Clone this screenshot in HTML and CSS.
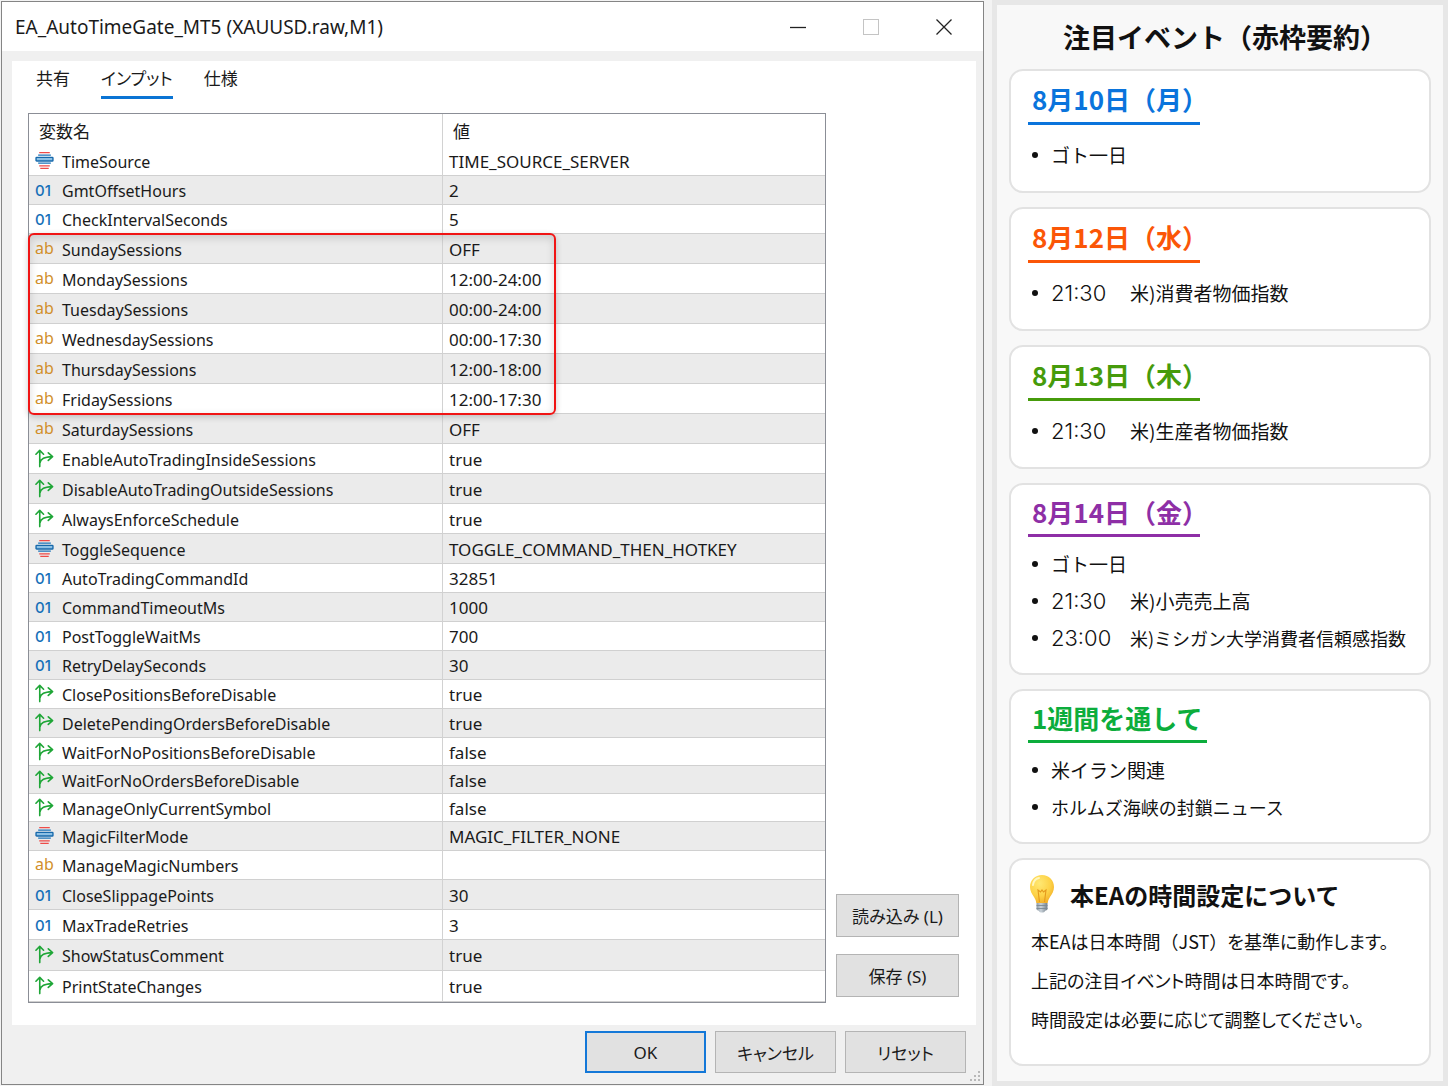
FILE: index.html
```html
<!DOCTYPE html>
<html lang="ja">
<head>
<meta charset="utf-8">
<meta name="viewport" content="width=device-width, initial-scale=1">
<title>EA_AutoTimeGate_MT5</title>
<link rel="stylesheet" href="styles.css">
</head>
<body>
<svg class="sprite" aria-hidden="true">
  <symbol id="i-enum" viewBox="0 0 18 18">
    <path d="M4 1.500h10M4 14h10M5 16.500h8" stroke="#ee4b48" stroke-width="1.200"/>
    <path d="M3 4h12M3 11.500h12" stroke="#1c74b8" stroke-width="1.200"/>
    <rect x="1" y="6" width="16" height="3.500" rx=".6" fill="#8cc0e4" stroke="#1668ab" stroke-width="1.300"/>
  </symbol>
  <symbol id="i-bool" viewBox="0 0 20 20">
    <path d="M5 18.500V2M1 5.500 5 1.500l4 4M5 15c1-5 5-6.500 13-7M14 4l4.500 4-4.500 4" fill="none" stroke="#1fa637" stroke-width="1.700" stroke-linecap="round" stroke-linejoin="round"/>
  </symbol>
</svg>
<div class="screen">
  <main class="window">
    <header class="titlebar">
      <h1 class="window-title">EA_AutoTimeGate_MT5 (XAUUSD.raw,M1)</h1>
      <div class="window-controls">
        <button type="button" aria-label="最小化"><svg width="18" height="18" viewBox="0 0 18 18"><path d="M1 9.500h16" stroke="#222" stroke-width="1.300"/></svg></button>
        <button type="button" aria-label="最大化" disabled><svg width="18" height="18" viewBox="0 0 18 18"><rect x="1.500" y="1.500" width="15" height="15" fill="none" stroke="#c4c4c4"/></svg></button>
        <button type="button" aria-label="閉じる"><svg width="18" height="18" viewBox="0 0 18 18"><path d="m1.500 1.500 15 15m0-15-15 15" stroke="#222" stroke-width="1.300"/></svg></button>
      </div>
    </header>
    <section class="panel">
      <nav class="tabs">
        <button type="button" class="tab">共有</button>
        <button type="button" class="tab active">インプット</button>
        <button type="button" class="tab">仕様</button>
      </nav>
      <div class="inputs">
        <div class="table-box">
          <table class="params">
            <thead><tr><th scope="col" class="col-name">変数名</th><th scope="col">値</th></tr></thead>
            <tbody class="rows-30">
              <tr><td><svg class="icon"><use href="#i-enum"/></svg>TimeSource</td><td>TIME_SOURCE_SERVER</td></tr>
            </tbody>
            <tbody class="rows-29">
              <tr class="alt"><td><span class="num">01</span>GmtOffsetHours</td><td>2</td></tr>
              <tr><td><span class="num">01</span>CheckIntervalSeconds</td><td>5</td></tr>
            </tbody>
            <tbody class="rows-30">
              <tr class="alt"><td><span class="str">ab</span>SundaySessions</td><td>OFF</td></tr>
              <tr><td><span class="str">ab</span>MondaySessions</td><td>12:00-24:00</td></tr>
              <tr class="alt"><td><span class="str">ab</span>TuesdaySessions</td><td>00:00-24:00</td></tr>
              <tr><td><span class="str">ab</span>WednesdaySessions</td><td>00:00-17:30</td></tr>
              <tr class="alt"><td><span class="str">ab</span>ThursdaySessions</td><td>12:00-18:00</td></tr>
              <tr><td><span class="str">ab</span>FridaySessions</td><td>12:00-17:30</td></tr>
              <tr class="alt"><td><span class="str">ab</span>SaturdaySessions</td><td>OFF</td></tr>
              <tr><td><svg class="icon"><use href="#i-bool"/></svg>EnableAutoTradingInsideSessions</td><td>true</td></tr>
              <tr class="alt"><td><svg class="icon"><use href="#i-bool"/></svg>DisableAutoTradingOutsideSessions</td><td>true</td></tr>
              <tr><td><svg class="icon"><use href="#i-bool"/></svg>AlwaysEnforceSchedule</td><td>true</td></tr>
              <tr class="alt"><td><svg class="icon"><use href="#i-enum"/></svg>ToggleSequence</td><td>TOGGLE_COMMAND_THEN_HOTKEY</td></tr>
            </tbody>
            <tbody class="rows-29">
              <tr><td><span class="num">01</span>AutoTradingCommandId</td><td>32851</td></tr>
              <tr class="alt"><td><span class="num">01</span>CommandTimeoutMs</td><td>1000</td></tr>
              <tr><td><span class="num">01</span>PostToggleWaitMs</td><td>700</td></tr>
              <tr class="alt"><td><span class="num">01</span>RetryDelaySeconds</td><td>30</td></tr>
              <tr><td><svg class="icon"><use href="#i-bool"/></svg>ClosePositionsBeforeDisable</td><td>true</td></tr>
              <tr class="alt"><td><svg class="icon"><use href="#i-bool"/></svg>DeletePendingOrdersBeforeDisable</td><td>true</td></tr>
            </tbody>
            <tbody class="rows-28">
              <tr><td><svg class="icon"><use href="#i-bool"/></svg>WaitForNoPositionsBeforeDisable</td><td>false</td></tr>
              <tr class="alt"><td><svg class="icon"><use href="#i-bool"/></svg>WaitForNoOrdersBeforeDisable</td><td>false</td></tr>
              <tr><td><svg class="icon"><use href="#i-bool"/></svg>ManageOnlyCurrentSymbol</td><td>false</td></tr>
            </tbody>
            <tbody class="rows-29">
              <tr class="alt"><td><svg class="icon"><use href="#i-enum"/></svg>MagicFilterMode</td><td>MAGIC_FILTER_NONE</td></tr>
              <tr><td><span class="str">ab</span>ManageMagicNumbers</td><td></td></tr>
            </tbody>
            <tbody class="rows-30">
              <tr class="alt"><td><span class="num">01</span>CloseSlippagePoints</td><td>30</td></tr>
              <tr><td><span class="num">01</span>MaxTradeRetries</td><td>3</td></tr>
            </tbody>
            <tbody class="rows-31">
              <tr class="alt"><td><svg class="icon"><use href="#i-bool"/></svg>ShowStatusComment</td><td>true</td></tr>
              <tr><td><svg class="icon"><use href="#i-bool"/></svg>PrintStateChanges</td><td>true</td></tr>
            </tbody>
          </table>
          <div class="highlight"></div>
        </div>
        <div class="side-actions">
          <button type="button" class="btn">読み込み (L)</button>
          <button type="button" class="btn">保存 (S)</button>
        </div>
      </div>
    </section>
    <footer class="footer">
      <button type="button" class="btn primary">OK</button>
      <button type="button" class="btn">キャンセル</button>
      <button type="button" class="btn">リセット</button>
      <svg class="grip" width="12" height="12" viewBox="0 0 12 12" fill="#b8b8b8"><path d="M9 1h2v2H9zM5 5h2v2H5zM9 5h2v2H9zM1 9h2v2H1zM5 9h2v2H5zM9 9h2v2H9z"/></svg>
    </footer>
  </main>

  <aside class="events">
    <h2 class="events-title">注目イベント（赤枠要約）</h2>
    <section class="card">
      <h3 class="day blue">8月10日（月）</h3>
      <ul><li>ゴト一日</li></ul>
    </section>
    <section class="card">
      <h3 class="day orange">8月12日（水）</h3>
      <ul><li><time>21:30</time>米)消費者物価指数</li></ul>
    </section>
    <section class="card">
      <h3 class="day green">8月13日（木）</h3>
      <ul><li><time>21:30</time>米)生産者物価指数</li></ul>
    </section>
    <section class="card dense">
      <h3 class="day purple">8月14日（金）</h3>
      <ul>
        <li>ゴト一日</li>
        <li><time>21:30</time>米)小売売上高</li>
        <li><time>23:00</time><span class="long">米)ミシガン大学消費者信頼感指数</span></li>
      </ul>
    </section>
    <section class="card dense">
      <h3 class="day emerald">1週間を通して</h3>
      <ul>
        <li>米イラン関連</li>
        <li><span class="long">ホルムズ海峡の封鎖ニュース</span></li>
      </ul>
    </section>
    <section class="card note">
      <h3 class="note-title">
        <svg class="bulb" width="26" height="40" viewBox="0 0 26 40" aria-hidden="true">
          <defs>
            <radialGradient id="glass" cx=".4" cy=".3" r=".75"><stop offset="0" stop-color="#ffe873"/><stop offset=".6" stop-color="#fdd247"/><stop offset="1" stop-color="#f2ad27"/></radialGradient>
            <linearGradient id="cap"><stop offset="0" stop-color="#8d99a3"/><stop offset=".4" stop-color="#c9d2d9"/><stop offset="1" stop-color="#73808b"/></linearGradient>
          </defs>
          <path d="M13 1C6 1 1 6 1 13c0 4 2 7 4 10 1.500 2.300 2 4 2.300 6h11.400c.3-2 .8-3.700 2.300-6 2-3 4-6 4-10C25 6 20 1 13 1z" fill="url(#glass)"/>
          <path d="M10.500 28 9 16l2.500 2 1.500-2 1.500 2 2.500-2-1.500 12" fill="none" stroke="#e59a1c" stroke-width="1.100"/>
          <path d="M4 11c.5-4 3-6.500 6-7" fill="none" stroke="#fff6bd" stroke-width="2" stroke-linecap="round"/>
          <path d="M7.500 29h11v6c0 1-1.500 1.500-2.500 2-.5 2-5.500 2-6 0-1-.5-2.500-1-2.500-2z" fill="url(#cap)"/>
          <path d="M7.500 31.500h11M7.500 34.500h11" stroke="#7c8993" stroke-width=".9"/>
        </svg>
        本EAの時間設定について
      </h3>
      <p>本EAは日本時間<span class="full">（JST）</span>を基準に動作します。</p>
      <p>上記の注目イベント時間は日本時間です。</p>
      <p>時間設定は必要に応じて調整してください。</p>
    </section>
  </aside>
</div>
</body>
</html>
```
FILE: styles.css
```css
* { box-sizing: border-box; }

body {
  margin: 0;
  background: #f3f3f3;
  color: #1a1a1a;
  font-family: "Noto Sans", "Noto Sans CJK JP", sans-serif;
  font-size: 17px;
}

h1, h2, h3, p, ul { margin: 0; padding: 0; }

button {
  font: inherit;
  color: inherit;
  font-feature-settings: "palt";
}

.sprite { position: absolute; width: 0; height: 0; }

.screen {
  display: grid;
  grid-template-columns: minmax(0, 1fr) 456px;
  gap: 8px;
  min-height: 100vh;
}

/* Dialog window */
.window {
  display: flex;
  flex-direction: column;
  margin: 1px 0 1px 1px;
  border: 1px solid #858585;
  background: #f0f0f0;
}

.titlebar {
  display: flex;
  align-items: center;
  justify-content: space-between;
  height: 49px;
  padding: 0 21px 0 13px;
  background: #fff;
}

.window-title {
  font-size: 19px;
  font-weight: 400;
}

.window-controls { display: flex; gap: 37px; }

.window-controls button {
  display: flex;
  padding: 9px;
  border: 0;
  background: none;
}

.panel {
  flex: 1;
  margin: 10px 7px 0 10px;
  padding: 0 17px 22px 16px;
  background: #fff;
}

.tabs {
  display: flex;
  gap: 31px;
  height: 52px;
  padding-left: 8px;
  align-items: flex-start;
}

.tab {
  height: 38px;
  padding: 0;
  border: 0;
  border-bottom: 3px solid transparent;
  background: none;
  line-height: 36px;
}

.tab.active { border-bottom-color: #0a74d4; }

.inputs { display: flex; gap: 10px; }

.table-box {
  position: relative;
  flex: 1;
  border: 1px solid #8b8e96;
}

.params {
  width: 100%;
  border-collapse: separate;
  border-spacing: 0;
  table-layout: fixed;
}

.params th {
  height: 32px;
  padding: 0 10px;
  font-weight: 400;
  text-align: left;
}

.col-name { width: 414px; }

.params th:first-child,
.params td:first-child { border-right: 1px solid #d2d2d2; }

.params td {
  padding: 2px 6px 0;
  border-bottom: 1px solid #d0d0d0;
  line-height: 24px;
  white-space: nowrap;
}

.params td:first-child { font-size: 16px; }

.params .alt td { background: #ebebeb; }
.rows-28 td { height: 28px; }
.rows-29 td { height: 29px; }
.rows-30 td { height: 30px; }
.rows-31 td { height: 31px; }

.icon, .num, .str {
  display: inline-block;
  width: 19px;
  margin-right: 8px;
}

.icon { height: 19px; vertical-align: -2px; }

.num {
  color: #1670b8;
  font-family: Inter, sans-serif;
  font-size: 15px;
  font-weight: 500;
  line-height: 20px;
  vertical-align: 1px;
}

.str {
  color: #d18f2a;
  line-height: 20px;
  vertical-align: 2px;
}

.highlight {
  position: absolute;
  top: 119px;
  left: -1px;
  width: 528px;
  height: 182px;
  border: 2px solid #f01414;
  border-radius: 6px;
  box-shadow: 0 2px 6px rgba(0, 0, 0, .2), inset 0 3px 8px rgba(0, 0, 0, .14);
  pointer-events: none;
}

.side-actions {
  display: flex;
  flex-direction: column;
  justify-content: flex-end;
  gap: 17px;
  width: 123px;
  padding-bottom: 6px;
}

.btn {
  height: 43px;
  padding: 0;
  border: 1px solid #b4b4b4;
  background: #e1e1e1;
}

.footer {
  position: relative;
  display: flex;
  justify-content: flex-end;
  gap: 9px;
  padding: 6px 17px 11px;
}

.footer .btn { width: 121px; height: 42px; }
.footer .primary { border: 2px solid #1478d8; }

.grip { position: absolute; right: 2px; bottom: 2px; }

/* Event summary */
.events {
  display: flex;
  flex-direction: column;
  gap: 14px;
  padding: 13px 12px 14px;
  border: 5px solid #e7e7e7;
  background: #f8f8f8;
  color: #111;
  font-family: "Noto Sans CJK JP", sans-serif;
}

.events-title {
  padding-left: 10px;
  font-size: 27px;
  font-weight: 700;
  line-height: 37px;
  text-align: center;
}

.card {
  padding: 8px 17px 18px;
  border: 2px solid #e2e2e2;
  border-radius: 14px;
  background: #fff;
}

.day {
  width: 172px;
  padding: 0 4px 3px;
  border-bottom: 3px solid;
  font-size: 26px;
  font-weight: 700;
  line-height: 40px;
  white-space: nowrap;
}

.blue { color: #0a74dc; }
.orange { color: #fb5607; }
.green { color: #469b0b; }
.purple { color: #8e2fa6; }
.emerald { width: 179px; color: #0cad3c; }

.card ul { margin-top: 11px; list-style: none; }

.card li {
  display: flex;
  align-items: center;
  height: 37px;
  font-size: 19px;
  white-space: nowrap;
}

.card li::before {
  content: "";
  width: 6px;
  height: 6px;
  margin: 0 13px 0 4px;
  border-radius: 50%;
  background: #111;
}

.card time {
  width: 79px;
  font-family: Inter, sans-serif;
  font-size: 22px;
  font-weight: 300;
}

.long { font-size: 18px; }

.dense { padding: 7px 17px 17px; }
.dense .day { padding-bottom: 2px; }
.dense ul { margin-top: 8px; }

.note { padding: 12px 18px 25px; }

.note-title {
  display: flex;
  align-items: center;
  gap: 15px;
  height: 44px;
  margin-bottom: 6px;
  font-size: 24px;
  font-weight: 700;
}

.note p {
  padding-left: 2px;
  font-size: 18px;
  line-height: 39px;
  font-feature-settings: "palt";
  white-space: nowrap;
}

.full { font-feature-settings: normal; }
```
